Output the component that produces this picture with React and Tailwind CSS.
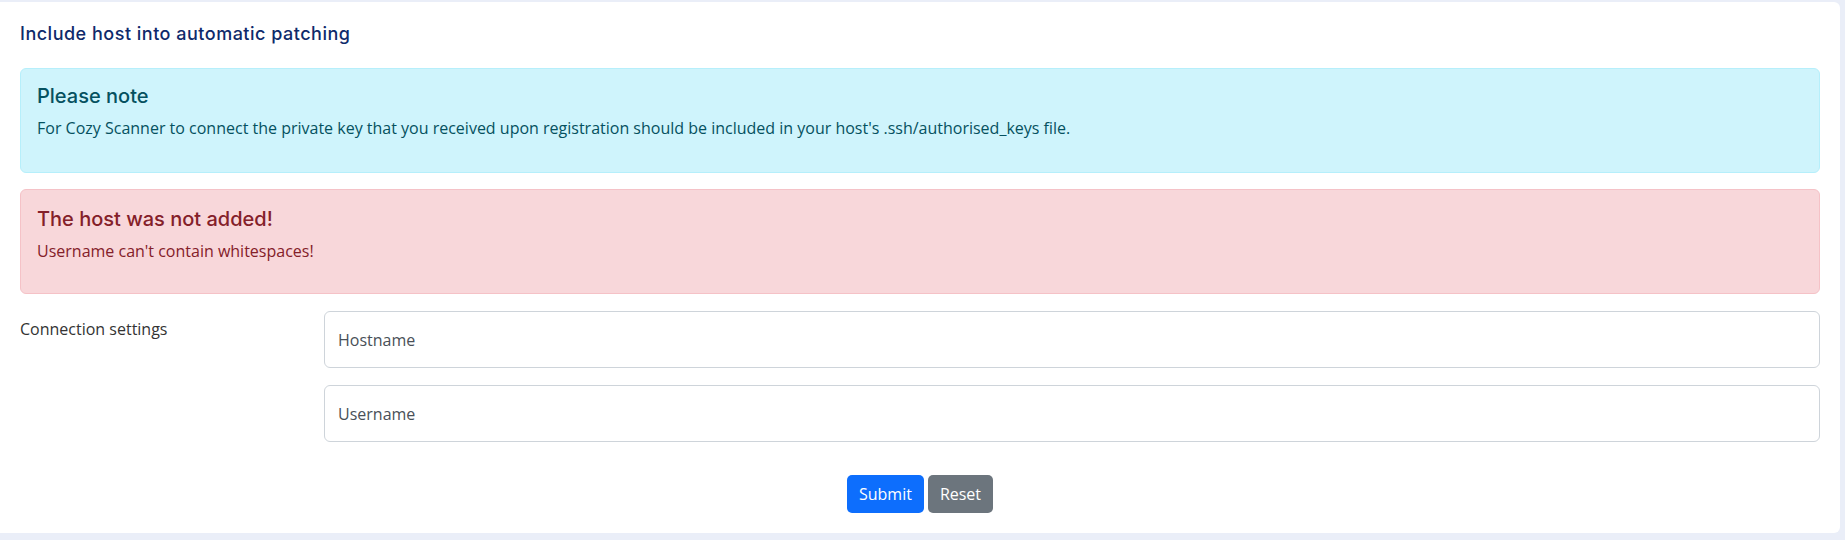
import React from 'react';

const heading = { fontFamily: 'Inter, "Noto Sans", sans-serif' };

export default function App() {
  return (
    <div
      className="w-[1845px] h-[540px] bg-[#eaeef8] pt-[2px] pr-[5px]"
      style={{ fontFamily: '"Open Sans", "Noto Sans", sans-serif' }}
    >
      <div className="bg-white rounded-r-[6px] h-[531px] px-5 pt-[20px]">
        <h5 className="text-[18px] leading-6 font-medium tracking-[0.5px] text-[#0f2a6b]" style={heading}>
          Include host into automatic patching
        </h5>

        <div className="mt-[22px] h-[105px] rounded-[6px] border border-[#b6effb] bg-[#cff4fc] text-[#055160] px-4 pt-[15px]">
          <h4 className="text-[20px] leading-6 font-medium" style={heading}>Please note</h4>
          <p className="mt-[8px] text-[16px] leading-6">
            For Cozy Scanner to connect the private key that you received upon registration should be included in your host's .ssh/authorised_keys file.
          </p>
        </div>

        <div className="mt-[16px] h-[105px] rounded-[6px] border border-[#f5c2c7] bg-[#f8d7da] text-[#842029] px-4 pt-[17px]">
          <h4 className="text-[20px] leading-6 font-medium" style={heading}>The host was not added!</h4>
          <p className="mt-[8px] text-[16px] leading-6">Username can't contain whitespaces!</p>
        </div>

        <div className="mt-[17px] flex">
          <div className="w-[304px] shrink-0 pt-[6px] text-[16px] leading-6 text-[#333]">Connection settings</div>
          <div className="flex-1 flex flex-col gap-[17px]">
            <div className="h-[57px] rounded-[6px] border border-[#ced4da] flex items-center px-[13px] text-[16px] text-[#495057]">
              Hostname
            </div>
            <div className="h-[57px] rounded-[6px] border border-[#ced4da] flex items-center px-[13px] text-[16px] text-[#495057]">
              Username
            </div>
          </div>
        </div>

        <div className="mt-[33px] flex justify-center gap-[4px]">
          <button className="h-[38px] px-[12px] rounded-[5px] bg-[#0d6efd] text-white text-[16px]">Submit</button>
          <button className="h-[38px] px-[12px] rounded-[5px] bg-[#6c757d] text-white text-[16px]">Reset</button>
        </div>
      </div>
    </div>
  );
}
